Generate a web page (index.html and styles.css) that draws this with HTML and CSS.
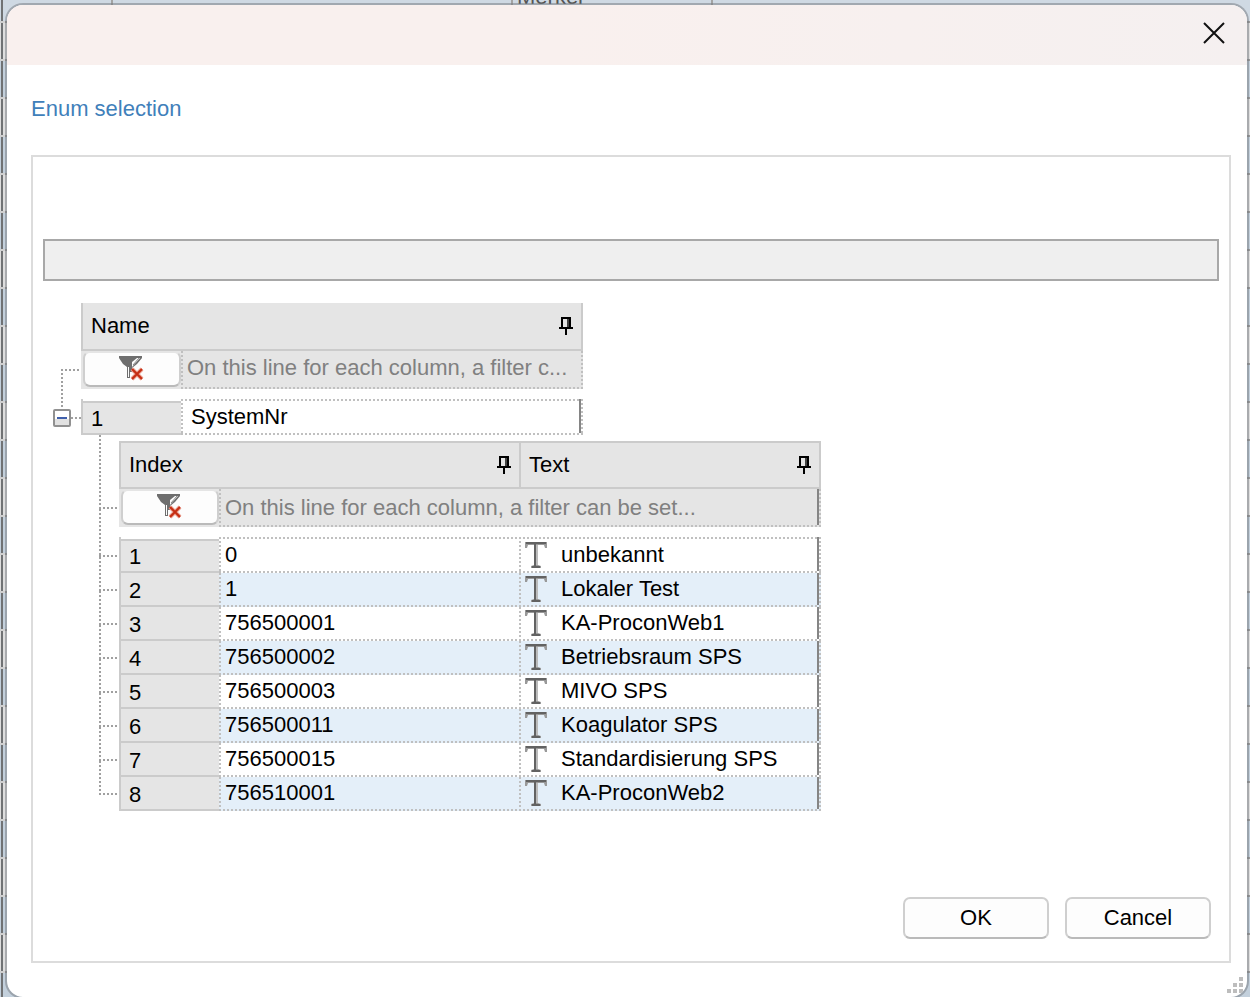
FILE: index.html
```html
<!DOCTYPE html>
<html lang="en">
<head>
<meta charset="utf-8">
<title>Enum selection</title>
<link rel="stylesheet" href="styles.css">
</head>
<body class="desktop">
<svg class="defs" width="0" height="0" aria-hidden="true">
  <symbol id="pin" viewBox="0 0 14 18"><path fill="#000" d="M2 0h10v10h2v2H8v6H6v-6H0v-2h2zM4 2v8h4V2z"/><path fill="#444" d="M8 2h2v8H8z"/></symbol>
  <symbol id="funnel" viewBox="0 0 26 26"><path fill="#6e6e6e" d="M0 1h23v2l-5 6-5 4v4h-2v6H8V12L4 9 0 3z"/><path fill="#fdfdfd" d="M13 7l5-4h3l-8 9zM9 12h1v10H9z"/><path fill="none" stroke="#888" stroke-width="1" d="M14 10l6-7"/><path fill="none" stroke="#ea9b8c" stroke-width="4" d="M13 14l10 10M23 14L13 24"/><path fill="none" stroke="#c52d12" stroke-width="2" d="M13 14l10 10M23 14L13 24"/></symbol>
  <symbol id="type" viewBox="0 0 22 26"><path fill="#999" d="M0 0h22v6h-2l-1-3h-6v20l3 1v2H6v-2l3-1V3H3L2 6H0z"/><path fill="#626262" d="M1 0h20v2H1zM9 2h2v22H9zM7 24h8v2H7z"/><path fill="#bbb" d="M11 3h2v20h-2z"/></symbol>
</svg>
<span class="behind">Merker</span>
<main class="dialog" role="dialog" aria-labelledby="dialog-title">
  <header class="titlebar">
    <button class="close" type="button" aria-label="Close"><svg width="22" height="22" viewBox="0 0 22 22"><path d="M1 1l20 20M21 1L1 21" stroke="#111" stroke-width="2" fill="none"/></svg></button>
  </header>
  <h1 class="title" id="dialog-title">Enum selection</h1>
  <section class="panel">
    <input class="bar" type="text" readonly aria-label="Selection">
    <div class="tree">
      <div class="root">
        <div class="root-gutter">
          <div class="elbow"></div>
          <div class="toggle-row"><button class="toggle" type="button" aria-label="Collapse SystemNr"></button><span class="stub"></span></div>
        </div>
        <table class="grid grid-root">
          <colgroup><col class="col-num"><col></colgroup>
          <thead>
            <tr class="head"><th colspan="2"><div class="label">Name<svg class="pin"><use href="#pin"/></svg></div></th></tr>
            <tr class="filter"><td><button class="clear" type="button" aria-label="Clear filter"><svg class="funnel"><use href="#funnel"/></svg></button></td><td class="hint edge">On this line for each column, a filter c...</td></tr>
          </thead>
          <tbody><tr><th class="num">1</th><td class="cell name last edge">SystemNr</td></tr></tbody>
        </table>
      </div>
      <div class="child">
        <div class="branches"><i class="branch first"></i><i class="branch second"></i><i class="branch"></i><i class="branch"></i><i class="branch"></i><i class="branch"></i><i class="branch"></i><i class="branch"></i><i class="branch"></i></div>
        <table class="grid grid-child">
          <colgroup><col class="col-num"><col class="col-index"><col></colgroup>
          <thead>
            <tr class="head"><th colspan="2"><div class="label">Index<svg class="pin"><use href="#pin"/></svg></div></th><th><div class="label">Text<svg class="pin"><use href="#pin"/></svg></div></th></tr>
            <tr class="filter"><td><button class="clear" type="button" aria-label="Clear filter"><svg class="funnel"><use href="#funnel"/></svg></button></td><td class="hint last edge" colspan="2">On this line for each column, a filter can be set...</td></tr>
          </thead>
          <tbody>
            <tr><th class="num">1</th><td class="cell">0</td><td class="cell last edge"><div class="value"><svg class="type"><use href="#type"/></svg>unbekannt</div></td></tr>
            <tr><th class="num">2</th><td class="cell">1</td><td class="cell last edge"><div class="value"><svg class="type"><use href="#type"/></svg>Lokaler Test</div></td></tr>
            <tr><th class="num">3</th><td class="cell">756500001</td><td class="cell last edge"><div class="value"><svg class="type"><use href="#type"/></svg>KA-ProconWeb1</div></td></tr>
            <tr><th class="num">4</th><td class="cell">756500002</td><td class="cell last edge"><div class="value"><svg class="type"><use href="#type"/></svg>Betriebsraum SPS</div></td></tr>
            <tr><th class="num">5</th><td class="cell">756500003</td><td class="cell last edge"><div class="value"><svg class="type"><use href="#type"/></svg>MIVO SPS</div></td></tr>
            <tr><th class="num">6</th><td class="cell">756500011</td><td class="cell last edge"><div class="value"><svg class="type"><use href="#type"/></svg>Koagulator SPS</div></td></tr>
            <tr><th class="num">7</th><td class="cell">756500015</td><td class="cell last edge"><div class="value"><svg class="type"><use href="#type"/></svg>Standardisierung SPS</div></td></tr>
            <tr><th class="num">8</th><td class="cell">756510001</td><td class="cell last edge"><div class="value"><svg class="type"><use href="#type"/></svg>KA-ProconWeb2</div></td></tr>
          </tbody>
        </table>
      </div>
    </div>
    <footer class="actions"><button class="action" type="button">OK</button><button class="action" type="button">Cancel</button></footer>
  </section>
  <svg class="grip" width="16" height="16" viewBox="0 0 16 16"><path fill="#bdbdbd" d="M12 0h4v4h-4zM6 6h4v4H6zM12 6h4v4h-4zM0 12h4v4H0zM6 12h4v4H6zM12 12h4v4h-4z"/></svg>
</main>
</body>
</html>
```
FILE: styles.css
```css
* { box-sizing: border-box; }

.desktop {
  --dot-x: repeating-linear-gradient(90deg, #c0c0c0 0 2px, transparent 2px 4px);
  --dot-y: repeating-linear-gradient(180deg, #c0c0c0 0 2px, transparent 2px 4px);
  --line-x: repeating-linear-gradient(90deg, #a0a0a0 0 2px, transparent 2px 4px);
  --line-y: repeating-linear-gradient(180deg, #a0a0a0 0 2px, transparent 2px 4px);
  --tick: linear-gradient(#a3a3a3, #a3a3a3);
  margin: 0;
  min-height: 100vh;
  padding: 3px 1px 0 5px;
  display: flex;
  overflow: hidden;
  font-family: "Liberation Sans", Arial, sans-serif;
  font-size: 22px;
  line-height: 28px;
  color: #000;
  background:
    repeating-linear-gradient(180deg, #d0d0d0 0 2px, transparent 2px 38px) 0 21px / 5px 100% no-repeat,
    linear-gradient(#707274, #707274) 1px 0 / 2px 100% no-repeat,
    var(--tick) 111px 0 / 2px 5px no-repeat,
    var(--tick) 511px 0 / 2px 5px no-repeat,
    var(--tick) 711px 0 / 2px 5px no-repeat,
    linear-gradient(#cfd9e3, #cfd9e3) 0 0 / 100% 21px no-repeat,
    repeating-linear-gradient(180deg, #999 0 2px, #dedede 2px 38px, #999 38px 40px, #c3d0dc 40px 76px) 0 21px;
}

.defs, .behind { position: absolute; }
.behind { left: 517px; top: -17px; color: #555; }
button { font: inherit; color: inherit; padding: 0; }

.dialog {
  position: relative;
  flex: 1;
  display: flex;
  flex-direction: column;
  margin-bottom: -2px;
  overflow: hidden;
  border: 2px solid rgba(115, 120, 125, .5);
  border-radius: 18px;
  background: #fff padding-box;
}
.titlebar {
  height: 60px;
  display: flex;
  justify-content: flex-end;
  align-items: center;
  padding: 0 22px 4px 0;
  background: linear-gradient(90deg, #f9f0ee 0 45%, #f5f0f0);
}
.close { width: 22px; height: 22px; border: 0; background: none; }
.close svg { display: block; }
.title {
  margin: 30px 24px 32px;
  font-size: 22px;
  font-weight: 400;
  color: #3f80ba;
}
.panel {
  flex: 1;
  display: flex;
  flex-direction: column;
  margin: 0 16px 34px 24px;
  padding: 82px 10px 22px;
  border: 2px solid #dcdcdc;
}
.bar {
  width: 100%;
  height: 42px;
  border: 2px solid #a8a8a8;
  background: #efefef;
}

.tree { margin: 22px 0 0 10px; }
.root, .child { display: flex; align-items: flex-start; }
.root-gutter { width: 28px; padding-top: 66px; }
.elbow {
  height: 40px;
  margin-left: 8px;
  background: var(--line-x) 0 0 / 100% 2px no-repeat, var(--line-y) 0 0 / 2px 100% no-repeat;
}
.toggle-row { display: flex; align-items: center; }
.toggle {
  width: 18px;
  height: 18px;
  border: 2px solid #919191;
  border-radius: 2px;
  background: linear-gradient(#4060ac, #4060ac) center / 10px 2px no-repeat, linear-gradient(#fff 60%, #e2e2e2 60%);
}
.stub { flex: 1; height: 2px; background: var(--line-x); }

.child { margin-left: 46px; }
.branches { width: 20px; }
.branch {
  display: block;
  height: 34px;
  background: var(--line-y) 0 0 / 2px 100% no-repeat, var(--line-x) 0 100% / 18px 2px no-repeat;
}
.first { height: 74px; }
.second { height: 48px; }

.grid { table-layout: fixed; border-collapse: separate; border-spacing: 0; }
.grid-root { width: 502px; }
.grid-child { width: 702px; margin-top: 6px; }
.col-num { width: 100px; }
.col-index { width: 300px; }
.grid th, .grid td { padding: 0; font-weight: 400; text-align: left; white-space: nowrap; }
.grid tbody::before { content: ""; display: block; height: 10px; }

.head th { height: 48px; background: #e5e5e5; border: 2px solid #cbcbcb; border-right-width: 0; }
.head th:last-child { border-right-width: 2px; }
.grid-root .head th { border-top: 0; }
.label { display: flex; align-items: center; justify-content: space-between; padding: 0 8px; }
.pin { width: 14px; height: 18px; }

.filter td { height: 38px; background-color: #e5e5e5; }
.filter .clear {
  display: flex;
  align-items: center;
  justify-content: center;
  width: 98px;
  height: 36px;
  margin: 0 0 2px 2px;
  border: 2px solid #cfcfcf;
  border-top-color: #e5e5e5;
  border-bottom-color: #bababa;
  border-radius: 7px;
  background: #fdfdfd;
}
.funnel { width: 26px; height: 26px; margin-bottom: 2px; }
.grid .hint {
  padding: 0 0 4px 6px;
  color: #808080;
  background-image: var(--dot-y), var(--dot-y), var(--dot-x);
  background-position: 0 0, 100% 0, 0 100%;
  background-size: 2px 100%, 2px 100%, 100% 2px;
  background-repeat: no-repeat;
}
.grid-child .hint { padding-bottom: 0; }

.grid .num {
  height: 34px;
  padding: 4px 0 0 8px;
  background: #e5e5e5;
  border: 2px solid #cbcbcb;
  border-width: 0 0 2px 2px;
}
.grid tbody tr:first-child .num {
  background: linear-gradient(#fff, #fff) 0 0 / 100% 2px no-repeat, linear-gradient(#cbcbcb, #cbcbcb) 0 2px / 100% 2px no-repeat, #e5e5e5;
  height: 36px;
  padding-top: 6px;
}
.grid .cell {
  padding: 0 0 2px 6px;
  background-image: var(--dot-y), var(--dot-y), var(--dot-x), var(--dot-x);
  background-position: 0 0, 100% 0, 0 100%, 0 0;
  background-size: 2px 100%, 0 0, 100% 2px, 0 0;
  background-repeat: no-repeat;
}
.grid tbody tr:first-child .cell { padding-top: 2px; background-size: 2px 100%, 0 0, 100% 2px, 100% 2px; }
.grid tbody tr:nth-child(even) .cell { background-color: #e4eff9; }
.grid .name { padding-left: 10px; }
.last { position: relative; }
.last::after {
  content: "";
  position: absolute;
  top: 0;
  right: 0;
  bottom: 2px;
  width: 4px;
  background: linear-gradient(#858585, #858585) 0 0 / 2px 100% no-repeat, var(--dot-y) 2px 0 / 2px 100% no-repeat;
}
.value { display: flex; align-items: center; gap: 14px; }
.type { width: 22px; height: 26px; }

.actions { display: flex; justify-content: flex-end; gap: 16px; margin-top: auto; padding-right: 8px; }
.action {
  width: 146px;
  height: 42px;
  border: 2px solid #cfcfcf;
  border-bottom-color: #bababa;
  border-radius: 7px;
  background: #fdfdfd;
}
.grip { position: absolute; right: 4px; bottom: 4px; }
```
